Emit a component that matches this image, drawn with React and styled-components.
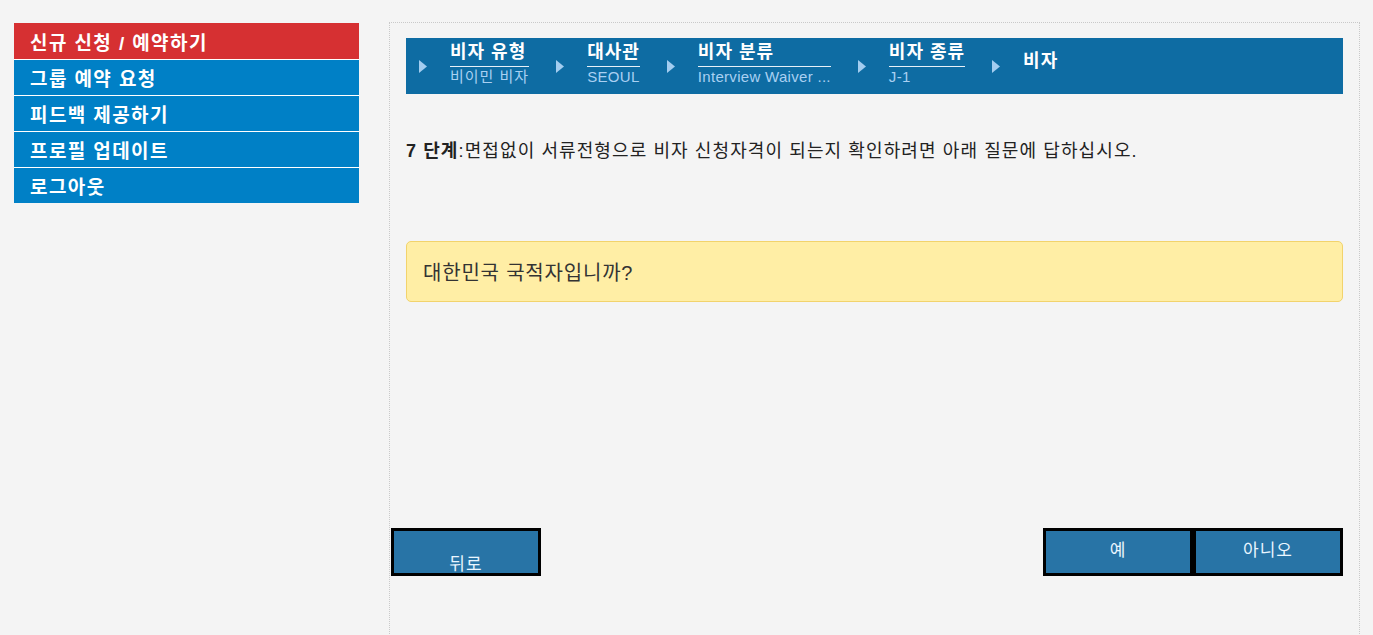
import React from "react";
import styled, { createGlobalStyle } from "styled-components";

const GlobalStyle = createGlobalStyle`
  html, body {
    margin: 0;
    padding: 0;
    background: #f4f4f4;
    font-family: "Liberation Sans", "Noto Sans CJK KR", sans-serif;
  }
`;

const menu = [
  { label: "신규 신청 / 예약하기", active: true },
  { label: "그룹 예약 요청" },
  { label: "피드백 제공하기" },
  { label: "프로필 업데이트" },
  { label: "로그아웃" },
];

const steps = [
  { title: "비자 유형", sub: "비이민 비자" },
  { title: "대사관", sub: "SEOUL" },
  { title: "비자 분류", sub: "Interview Waiver ..." },
  { title: "비자 종류", sub: "J-1" },
  { title: "비자" },
];

const isKorean = (t) => /[\uac00-\ud7a3]/.test(t);

function Arrow() {
  return (
    <ArrowIcon width="8" height="13" viewBox="0 0 8 13">
      <polygon points="0,0 8,6.5 0,13" fill="#a3cdf0" />
    </ArrowIcon>
  );
}

function App() {
  return (
    <>
      <GlobalStyle />
      <Page>
        <Sidebar>
          {menu.map((m) => (
            <MenuItem key={m.label} active={m.active}>
              {m.label}
            </MenuItem>
          ))}
        </Sidebar>
        <Panel>
          <Breadcrumb>
            {steps.map((s) => (
              <Step key={s.title}>
                <Arrow />
                <StepBody single={!s.sub}>
                  <StepTitle underline={!!s.sub}>{s.title}</StepTitle>
                  {s.sub && <StepSub ko={isKorean(s.sub)}>{s.sub}</StepSub>}
                </StepBody>
              </Step>
            ))}
          </Breadcrumb>

          <Instruction>
            <b>7 단계</b>:면접없이 서류전형으로 비자 신청자격이 되는지 확인하려면 아래 질문에 답하십시오.
          </Instruction>

          <Question>대한민국 국적자입니까?</Question>

          <ButtonRow>
            <NavButton back>뒤로</NavButton>
            <Answers>
              <NavButton>예</NavButton>
              <NavButton>아니오</NavButton>
            </Answers>
          </ButtonRow>
        </Panel>
      </Page>
    </>
  );
}

const Page = styled.div`
  display: flex;
  align-items: flex-start;
  gap: 30px;
  padding: 22px 0 0 14px;
  height: 635px;
  box-sizing: border-box;
  overflow: hidden;
`;

const Sidebar = styled.nav`
  width: 345px;
  margin-top: 1px;
  display: flex;
  flex-direction: column;
`;

const MenuItem = styled.div`
  height: 36px;
  box-sizing: border-box;
  display: flex;
  align-items: center;
  padding-left: 16px;
  background: ${(p) => (p.active ? "#d63032" : "#0080c6")};
  color: #fff;
  font-size: 19px;
  letter-spacing: 1.4px;
  font-weight: bold;
  & + & {
    border-top: 1px solid #fff;
  }
`;

const Panel = styled.main`
  width: 971px;
  min-height: 640px;
  box-sizing: border-box;
  border: 1px dotted #c9c9c9;
  padding: 15px 16px 0;
`;

const Breadcrumb = styled.div`
  height: 56px;
  background: #0e6ca3;
  display: flex;
  padding-left: 13px;
`;

const Step = styled.div`
  display: flex;
  align-items: center;
`;

const ArrowIcon = styled.svg`
  display: block;
  flex: none;
`;

const StepBody = styled.div`
  align-self: flex-start;
  display: flex;
  flex-direction: column;
  margin: 0 27px 0 23px;
  padding-top: ${(p) => (p.single ? "12px" : "3px")};
`;

const StepTitle = styled.div`
  color: #fff;
  font-size: 18px;
  font-weight: bold;
  letter-spacing: 1px;
  line-height: 22px;
  padding-bottom: 3px;
  border-bottom: 1px solid ${(p) => (p.underline ? "#e6f0f8" : "transparent")};
`;

const StepSub = styled.div`
  color: #a9d0f2;
  font-size: 15px;
  line-height: 20px;
  letter-spacing: ${(p) => (p.ko ? "1px" : "0.3px")};
  white-space: nowrap;
`;

const Instruction = styled.p`
  margin: 44px 0 0;
  font-size: 18px;
  letter-spacing: 1.1px;
  line-height: 26px;
  color: #222;
  b {
    font-weight: bold;
  }
`;

const Question = styled.div`
  margin-top: 77px;
  height: 61px;
  box-sizing: border-box;
  display: flex;
  align-items: center;
  padding: 0 16px;
  background: #ffeea5;
  border: 1px solid #f2d36c;
  border-radius: 5px;
  color: #333;
  font-size: 20px;
  letter-spacing: 0.8px;
`;

const ButtonRow = styled.div`
  margin: 226px 0 0 -15px;
  display: flex;
  justify-content: space-between;
`;

const Answers = styled.div`
  display: flex;
`;

const NavButton = styled.button`
  width: 150px;
  height: 48px;
  box-sizing: border-box;
  border: 3px solid #000;
  background: #2874a6;
  color: #eaf6ff;
  font-family: "Liberation Sans", "Noto Sans CJK KR", sans-serif;
  font-size: 17px;
  letter-spacing: 1px;
  overflow: hidden;
  padding: ${(p) => (p.back ? "22px 0 0" : "0 0 3px")};
  line-height: 24px;
  cursor: pointer;
`;

export default App;
